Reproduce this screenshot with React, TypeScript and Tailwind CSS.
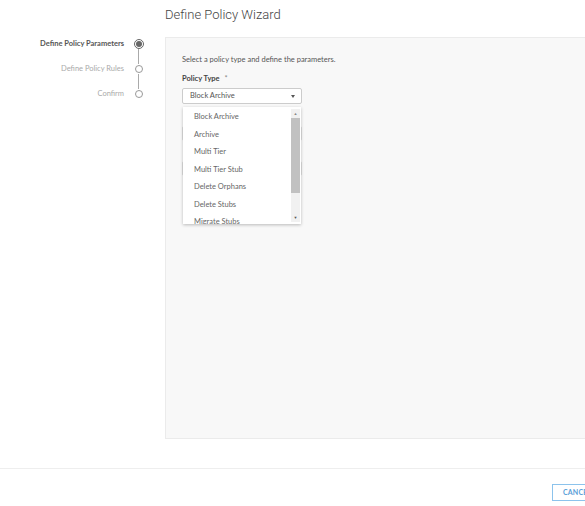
const steps = [
  { label: "Define Policy Parameters", active: true },
  { label: "Define Policy Rules", active: false },
  { label: "Confirm", active: false },
];

const policyTypes = [
  "Block Archive",
  "Archive",
  "Multi Tier",
  "Multi Tier Stub",
  "Delete Orphans",
  "Delete Stubs",
  "Migrate Stubs",
];

const StepDot = ({ active }: { active: boolean }) =>
  active ? (
    <div className="w-[10px] h-[10px] rounded-full border border-[#666] flex items-center justify-center bg-white">
      <div className="w-[6px] h-[6px] rounded-full bg-[#666]" />
    </div>
  ) : (
    <div className="w-[8px] h-[8px] rounded-full border-[1.5px] border-[#999] bg-white" />
  );

const Stepper = () => (
  <div className="w-[165px] shrink-0 pt-[2px] flex flex-col">
    {steps.map((step, i) => (
      <div key={step.label} className="flex flex-col">
        <div className="flex items-center h-[10px]">
          <div
            className={`w-[124px] text-right text-[7.5px] leading-none ${
              step.active ? "font-bold text-[#555]" : "text-[#aaa]"
            }`}
          >
            {step.label}
          </div>
          <div className="w-[29px] flex justify-center">
            <StepDot active={step.active} />
          </div>
        </div>
        {i < steps.length - 1 && (
          <div className="flex h-[15px]">
            <div className="w-[124px]" />
            <div className="w-[29px] flex justify-center">
              <div className="w-px h-full bg-[#aaa]" />
            </div>
          </div>
        )}
      </div>
    ))}
  </div>
);

const Dropdown = () => (
  <div className="absolute left-[1px] top-[19px] w-[118px] h-[117px] bg-white shadow-[0_1px_3px_rgba(0,0,0,0.25)] flex overflow-hidden z-10">
    <ul className="flex-1 pt-[1px]">
      {policyTypes.map((t) => (
        <li key={t} className="h-[17.5px] flex items-center pl-[11px] text-[7.5px] text-[#666]">
          {t}
        </li>
      ))}
    </ul>
    <div className="w-[9px] mr-[1px] my-[2px] bg-[#f1f1f1] flex flex-col items-center">
      <div className="h-[9px] flex items-center justify-center text-[4px] text-[#888]">▲</div>
      <div className="w-full h-[75px] bg-[#c1c1c1]" />
      <div className="flex-1" />
      <div className="h-[9px] flex items-center justify-center text-[4px] text-[#555]">▼</div>
    </div>
  </div>
);

export default function App() {
  return (
    <div
      className="w-[585px] h-[506px] bg-white overflow-hidden flex flex-col"
      style={{ fontFamily: "Lato, 'Open Sans', sans-serif" }}
    >
      <div className="h-[37px] shrink-0 pl-[165px] pt-[6px]">
        <h1
          className="text-[13px] font-light text-[#444] leading-[18px]"
          style={{ fontFamily: "Roboto, 'Liberation Sans', sans-serif" }}
        >
          Define Policy Wizard
        </h1>
      </div>

      <div className="flex h-[402px] shrink-0">
        <Stepper />
        <div className="w-[440px] h-[402px] shrink-0 bg-[#f8f8f8] border border-[#ebebeb] pl-[16px] pt-[17px]">
          <p className="text-[7.5px] text-[#565656] leading-[10px]">
            Select a policy type and define the parameters.
          </p>
          <div className="mt-[9px] text-[7.5px] font-bold text-[#444] leading-[10px]">
            Policy Type <span className="font-normal text-[#888] ml-[3px]">*</span>
          </div>
          <div className="relative mt-[4px] w-[120px]">
            <div className="h-[16px] bg-white border border-[#ccc] rounded-[2px] flex items-center justify-between pl-[7px] pr-[6px]">
              <span className="text-[7.5px] text-[#555]">Block Archive</span>
              <span className="w-0 h-0 border-l-[2.5px] border-r-[2.5px] border-t-[3px] border-l-transparent border-r-transparent border-t-[#555]" />
            </div>
            <Dropdown />
            <div className="mt-[22px] h-[15px] bg-white border border-[#ddd] rounded-[2px]" />
            <div className="mt-[20px] h-[15px] bg-white border border-[#ddd] rounded-[2px]" />
          </div>
        </div>
      </div>

      <div className="mt-[29px] shrink-0 border-t border-[#eee] pl-[552px] pt-[15px] flex">
        <button className="h-[17px] w-[70px] border border-[#8cc3ec] text-[#5aa0d8] text-[7px] font-bold tracking-wide text-left pl-[10px] leading-none">
          CANCEL
        </button>
      </div>
    </div>
  );
}
